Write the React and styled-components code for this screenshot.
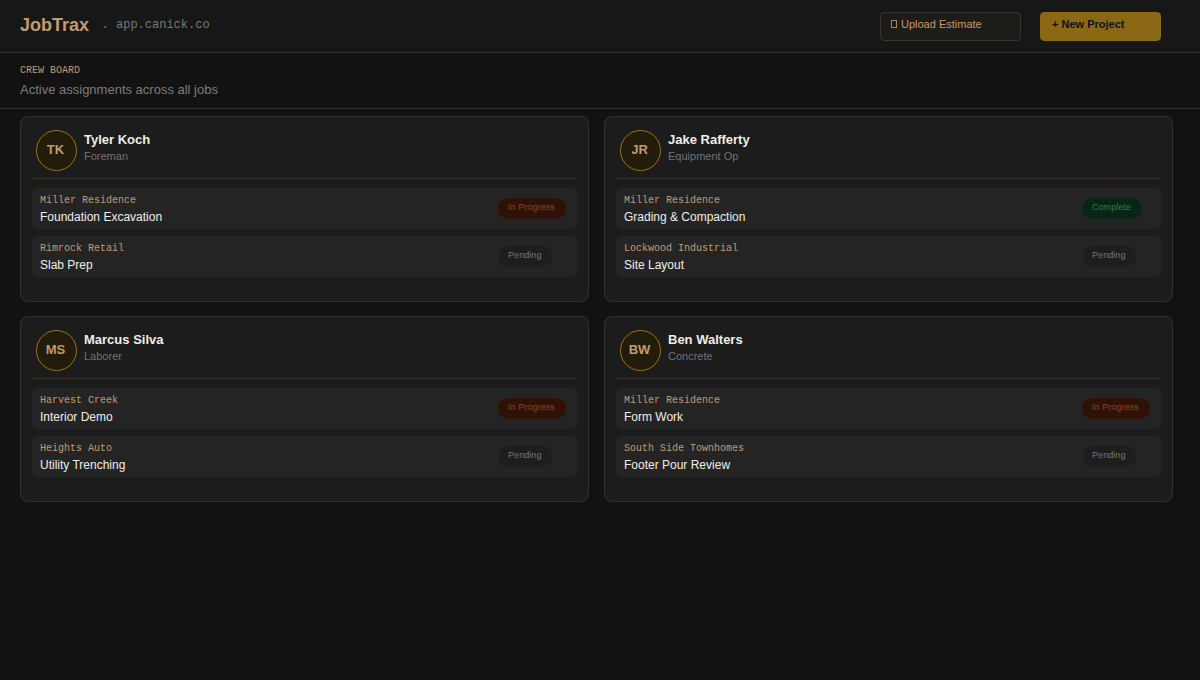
import React from 'react';
import styled, { createGlobalStyle } from 'styled-components';

const sans = '"Liberation Sans", Arial, sans-serif';
const mono = '"Liberation Mono", "Courier New", monospace';

const GlobalStyle = createGlobalStyle`
  * {
    box-sizing: border-box;
  }
  body {
    margin: 0;
    background: #121212;
    font-family: ${sans};
  }
`;

const Page = styled.div`
  height: 680px;
  overflow: hidden;
  background: #121212;
`;

const Header = styled.header`
  display: flex;
  align-items: flex-start;
  height: 53px;
  padding: 12px 39px 0 20px;
  background: #171717;
  border-bottom: 1px solid #3a322c;
`;

const Logo = styled.div`
  width: 81.6px;
  padding-top: 3px;
  color: #c49a6c;
  font-size: 18px;
  font-weight: bold;
  line-height: 20px;
`;

const Domain = styled.div`
  padding-top: 6px;
  color: #787878;
  font-family: ${mono};
  font-size: 12px;
  line-height: 14px;
  white-space: pre;
`;

const Actions = styled.div`
  display: flex;
  gap: 19px;
  margin-left: auto;
`;

const Button = styled.button`
  display: flex;
  align-items: flex-start;
  width: ${(props) => (props.$primary ? '121px' : '141px')};
  height: 29px;
  padding: ${(props) => (props.$primary ? '5px 11px' : '5px 10px')};
  border: 1px solid ${(props) => (props.$primary ? '#8b6914' : '#3a342c')};
  border-radius: 4px;
  background: ${(props) => (props.$primary ? '#8b6914' : '#1e1c18')};
  color: ${(props) => (props.$primary ? '#121212' : '#c49a6c')};
  font-family: ${sans};
  font-size: 11px;
  font-weight: ${(props) => (props.$primary ? 'bold' : 'normal')};
  line-height: 13px;
  white-space: nowrap;
`;

const FileBox = styled.span`
  width: 6px;
  height: 8px;
  margin: 2px 4px 0 0;
  border: 1px solid #a8845d;
`;

const SubHeader = styled.section`
  height: 56px;
  padding: 12px 20px 0;
  border-bottom: 1px solid #33302d;
`;

const Eyebrow = styled.div`
  color: #c49a6c;
  font-family: ${mono};
  font-size: 10px;
  line-height: 12px;
`;

const Subtitle = styled.div`
  margin-top: 5px;
  color: #7c7c7c;
  font-size: 13px;
  line-height: 15px;
`;

const Board = styled.main`
  display: grid;
  grid-template-columns: 569px 569px;
  grid-auto-rows: 186px;
  gap: 14px 15px;
  padding: 7px 20px;
`;

const Card = styled.article`
  padding: 11px;
  border: 1px solid #35302c;
  border-radius: 8px;
  background: #1c1c1c;
`;

const Person = styled.div`
  display: flex;
  height: 51px;
  padding: 2px 4px 0;
  border-bottom: 1px solid #3a322c;
`;

const Avatar = styled.div`
  width: 41px;
  height: 41px;
  padding-top: 11px;
  padding-right: 2px;
  border: 1px solid #9a7212;
  border-radius: 50%;
  background: #221c0b;
  color: #c49a6c;
  font-size: 13px;
  font-weight: bold;
  line-height: 15px;
  text-align: center;
`;

const PersonText = styled.div`
  padding: 2px 0 0 7px;
`;

const Name = styled.div`
  color: #f0ede8;
  font-size: 13px;
  font-weight: bold;
  line-height: 15px;
`;

const Role = styled.div`
  margin-top: 3px;
  color: #727272;
  font-size: 11px;
  line-height: 12px;
`;

const Jobs = styled.div`
  display: flex;
  flex-direction: column;
  gap: 7px;
  margin-top: 9px;
`;

const Job = styled.div`
  display: flex;
  height: 41px;
  padding: 6px 8px 0;
  border-radius: 6px;
  background: #242424;
`;

const JobText = styled.div`
  width: 458px;
  padding-top: 1px;
`;

const Project = styled.div`
  color: #c49a6c;
  font-family: ${mono};
  font-size: 10px;
  line-height: 12px;
`;

const Task = styled.div`
  margin-top: 3px;
  color: #f0ede8;
  font-size: 12px;
  line-height: 14px;
`;

const badges = {
  'In Progress': { width: 68, color: '#a23c14', background: '#2e1206' },
  Complete: { width: 60, color: '#1e8648', background: '#0a2415' },
  Pending: { width: 54, color: '#767676', background: '#1e1e1e' },
};

const Badge = styled.div`
  width: ${(props) => badges[props.$status].width}px;
  height: 21px;
  margin-top: 4px;
  padding: 4px 0 0 10px;
  border-radius: 10px;
  background: ${(props) => badges[props.$status].background};
  color: ${(props) => badges[props.$status].color};
  font-size: 9px;
  letter-spacing: 0.06px;
  line-height: 10px;
  white-space: nowrap;
`;

const crew = [
  {
    initials: 'TK',
    name: 'Tyler Koch',
    role: 'Foreman',
    jobs: [
      { project: 'Miller Residence', task: 'Foundation Excavation', status: 'In Progress' },
      { project: 'Rimrock Retail', task: 'Slab Prep', status: 'Pending' },
    ],
  },
  {
    initials: 'JR',
    name: 'Jake Rafferty',
    role: 'Equipment Op',
    jobs: [
      { project: 'Miller Residence', task: 'Grading & Compaction', status: 'Complete' },
      { project: 'Lockwood Industrial', task: 'Site Layout', status: 'Pending' },
    ],
  },
  {
    initials: 'MS',
    name: 'Marcus Silva',
    role: 'Laborer',
    jobs: [
      { project: 'Harvest Creek', task: 'Interior Demo', status: 'In Progress' },
      { project: 'Heights Auto', task: 'Utility Trenching', status: 'Pending' },
    ],
  },
  {
    initials: 'BW',
    name: 'Ben Walters',
    role: 'Concrete',
    jobs: [
      { project: 'Miller Residence', task: 'Form Work', status: 'In Progress' },
      { project: 'South Side Townhomes', task: 'Footer Pour Review', status: 'Pending' },
    ],
  },
];

const CrewCard = ({ member }) => {
  return (
    <Card>
      <Person>
        <Avatar>{member.initials}</Avatar>
        <PersonText>
          <Name>{member.name}</Name>
          <Role>{member.role}</Role>
        </PersonText>
      </Person>
      <Jobs>
        {member.jobs.map((job) => (
          <Job key={job.task}>
            <JobText>
              <Project>{job.project}</Project>
              <Task>{job.task}</Task>
            </JobText>
            <Badge $status={job.status}>{job.status}</Badge>
          </Job>
        ))}
      </Jobs>
    </Card>
  );
};

const App = () => {
  return (
    <Page>
      <GlobalStyle />
      <Header>
        <Logo>JobTrax</Logo>
        <Domain>. app.canick.co</Domain>
        <Actions>
          <Button>
            <FileBox />
            Upload Estimate
          </Button>
          <Button $primary>+ New Project</Button>
        </Actions>
      </Header>
      <SubHeader>
        <Eyebrow>CREW BOARD</Eyebrow>
        <Subtitle>Active assignments across all jobs</Subtitle>
      </SubHeader>
      <Board>
        {crew.map((member) => (
          <CrewCard key={member.name} member={member} />
        ))}
      </Board>
    </Page>
  );
};

export default App;
